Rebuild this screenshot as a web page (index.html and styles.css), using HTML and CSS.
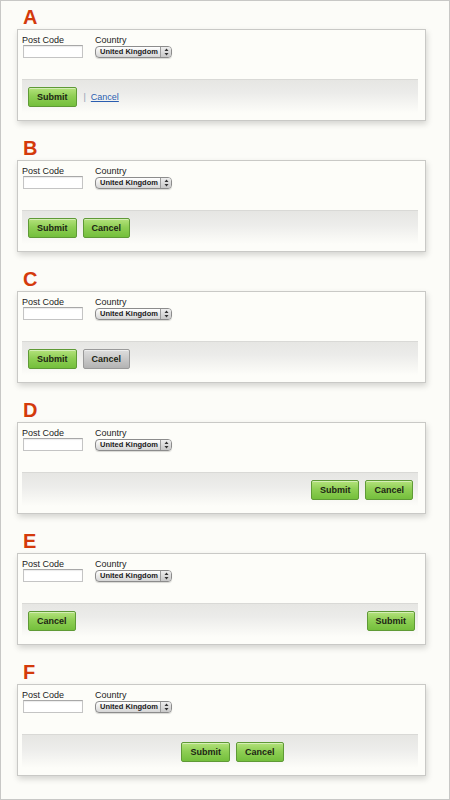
FILE: index.html
```html
<!DOCTYPE html>
<html>
<head>
<meta charset="utf-8">
<link rel="stylesheet" href="styles.css">
</head>
<body>
<div class="frame">

  <section class="variant">
    <h2 class="letter">A</h2>
    <div class="panel">
      <div class="fields">
        <div class="field field-post"><label>Post Code</label><input class="text-input" type="text"></div>
        <div class="field"><label>Country</label>
          <div class="select"><span class="select-text">United Kingdom</span><span class="select-arrows"><svg width="5" height="8" viewBox="0 0 5 8"><path d="M2.5 0.5 L4.5 3 L0.5 3 Z M0.5 5 L4.5 5 L2.5 7.5 Z" fill="#333"/></svg></span></div>
        </div>
      </div>
      <div class="footer footer-left">
        <button class="btn btn-green">Submit</button>
        <span class="sep">|</span>
        <a class="link" href="#">Cancel</a>
      </div>
    </div>
  </section>

  <section class="variant">
    <h2 class="letter">B</h2>
    <div class="panel">
      <div class="fields">
        <div class="field field-post"><label>Post Code</label><input class="text-input" type="text"></div>
        <div class="field"><label>Country</label>
          <div class="select"><span class="select-text">United Kingdom</span><span class="select-arrows"><svg width="5" height="8" viewBox="0 0 5 8"><path d="M2.5 0.5 L4.5 3 L0.5 3 Z M0.5 5 L4.5 5 L2.5 7.5 Z" fill="#333"/></svg></span></div>
        </div>
      </div>
      <div class="footer footer-left">
        <button class="btn btn-green">Submit</button>
        <button class="btn btn-green">Cancel</button>
      </div>
    </div>
  </section>

  <section class="variant">
    <h2 class="letter">C</h2>
    <div class="panel">
      <div class="fields">
        <div class="field field-post"><label>Post Code</label><input class="text-input" type="text"></div>
        <div class="field"><label>Country</label>
          <div class="select"><span class="select-text">United Kingdom</span><span class="select-arrows"><svg width="5" height="8" viewBox="0 0 5 8"><path d="M2.5 0.5 L4.5 3 L0.5 3 Z M0.5 5 L4.5 5 L2.5 7.5 Z" fill="#333"/></svg></span></div>
        </div>
      </div>
      <div class="footer footer-left">
        <button class="btn btn-green">Submit</button>
        <button class="btn btn-gray">Cancel</button>
      </div>
    </div>
  </section>

  <section class="variant">
    <h2 class="letter">D</h2>
    <div class="panel">
      <div class="fields">
        <div class="field field-post"><label>Post Code</label><input class="text-input" type="text"></div>
        <div class="field"><label>Country</label>
          <div class="select"><span class="select-text">United Kingdom</span><span class="select-arrows"><svg width="5" height="8" viewBox="0 0 5 8"><path d="M2.5 0.5 L4.5 3 L0.5 3 Z M0.5 5 L4.5 5 L2.5 7.5 Z" fill="#333"/></svg></span></div>
        </div>
      </div>
      <div class="footer footer-right">
        <button class="btn btn-green">Submit</button>
        <button class="btn btn-green">Cancel</button>
      </div>
    </div>
  </section>

  <section class="variant">
    <h2 class="letter">E</h2>
    <div class="panel">
      <div class="fields">
        <div class="field field-post"><label>Post Code</label><input class="text-input" type="text"></div>
        <div class="field"><label>Country</label>
          <div class="select"><span class="select-text">United Kingdom</span><span class="select-arrows"><svg width="5" height="8" viewBox="0 0 5 8"><path d="M2.5 0.5 L4.5 3 L0.5 3 Z M0.5 5 L4.5 5 L2.5 7.5 Z" fill="#333"/></svg></span></div>
        </div>
      </div>
      <div class="footer footer-split">
        <button class="btn btn-green">Cancel</button>
        <button class="btn btn-green">Submit</button>
      </div>
    </div>
  </section>

  <section class="variant">
    <h2 class="letter">F</h2>
    <div class="panel">
      <div class="fields">
        <div class="field field-post"><label>Post Code</label><input class="text-input" type="text"></div>
        <div class="field"><label>Country</label>
          <div class="select"><span class="select-text">United Kingdom</span><span class="select-arrows"><svg width="5" height="8" viewBox="0 0 5 8"><path d="M2.5 0.5 L4.5 3 L0.5 3 Z M0.5 5 L4.5 5 L2.5 7.5 Z" fill="#333"/></svg></span></div>
        </div>
      </div>
      <div class="footer footer-center">
        <button class="btn btn-green">Submit</button>
        <button class="btn btn-green">Cancel</button>
      </div>
    </div>
  </section>

</div>
</body>
</html>
```

FILE: styles.css
```css
* { box-sizing: border-box; }

html, body {
  margin: 0;
  padding: 0;
  background: #fcfcf8;
}

.frame {
  width: 450px;
  height: 800px;
  border: 1px solid #c8c8c6;
  background: #fcfcf8;
  padding: 6px 23px 0 16px;
  font-family: "Liberation Sans", Arial, sans-serif;
  overflow: hidden;
}

.variant {
  margin: 0 0 17px 0;
}

.letter {
  margin: 0 0 2px 6px;
  font-family: "Liberation Sans", Arial, sans-serif;
  font-weight: bold;
  font-size: 20px;
  line-height: 20px;
  height: 20px;
  color: #d43a0c;
}

.panel {
  height: 92px;
  border: 1px solid #c9c9c6;
  background: #fdfdf9;
  box-shadow: 1px 3px 6px rgba(0, 0, 0, 0.16);
  padding: 5px 7px 0 4px;
}

.fields {
  display: flex;
  gap: 12px;
  height: 23px;
}

.field {
  display: flex;
  flex-direction: column;
}

.field-post {
  width: 61px;
}

.field label {
  display: block;
  font-size: 9px;
  line-height: 10px;
  height: 10px;
  color: #222;
}

.text-input {
  -webkit-appearance: none;
  appearance: none;
  display: block;
  margin: 0 0 0 1px;
  width: 60px;
  height: 13px;
  padding: 0;
  border: 1px solid #c4c4c4;
  border-top-color: #a8a8a8;
  background: #fff;
  box-shadow: inset 0 1px 1px rgba(0, 0, 0, 0.08);
  outline: none;
}

.select {
  display: flex;
  align-items: stretch;
  width: 77px;
  height: 12px;
  margin-top: 1px;
  border: 1px solid #8c8c8c;
  border-radius: 4px;
  background: linear-gradient(#ffffff, #e6e6e6 60%, #d6d6d6);
  box-shadow: 0 1px 1px rgba(0, 0, 0, 0.15);
  overflow: hidden;
}

.select-text {
  flex: 1;
  padding-left: 4px;
  font-size: 7.5px;
  font-weight: bold;
  line-height: 10px;
  color: #1a1a1a;
  white-space: nowrap;
}

.select-arrows {
  width: 11px;
  display: flex;
  align-items: center;
  justify-content: center;
  border-left: 1px solid #9a9a9a;
  background: linear-gradient(#eeeeee, #c8c8c8);
}

.footer {
  margin-top: 21px;
  height: 34px;
  border-top: 1px solid #d9d9d6;
  background: linear-gradient(#e6e6e3 0%, #ececea 40%, #fdfdf9 100%);
  padding: 7px 5px 0 6px;
  display: flex;
  align-items: flex-start;
  gap: 6px;
}

.footer-right {
  justify-content: flex-end;
}

.footer-split {
  justify-content: space-between;
  padding-right: 3px;
}

.footer-center {
  justify-content: center;
  padding-left: 30px;
}

.btn {
  height: 20px;
  padding: 0 8px;
  border: 1px solid #5f9a36;
  border-radius: 2px;
  font-family: "Liberation Sans", Arial, sans-serif;
  font-weight: bold;
  font-size: 9px;
  line-height: 18px;
  color: #1c2514;
  cursor: pointer;
}

.btn-green {
  background: linear-gradient(#b4e27c 0%, #8fcf55 45%, #74bf3c 100%);
  box-shadow: inset 0 1px 0 rgba(255, 255, 255, 0.45);
}

.btn-gray {
  border-color: #9a9a9a;
  background: linear-gradient(#dedede 0%, #c8c8c8 50%, #b3b3b3 100%);
  box-shadow: inset 0 1px 0 rgba(255, 255, 255, 0.5);
}

.sep {
  margin-left: 1px;
  font-size: 9px;
  line-height: 20px;
  color: #8fa1b5;
}

.link {
  margin-left: -1px;
  font-size: 9px;
  line-height: 20px;
  color: #2a5db0;
  text-decoration: underline;
}
```
